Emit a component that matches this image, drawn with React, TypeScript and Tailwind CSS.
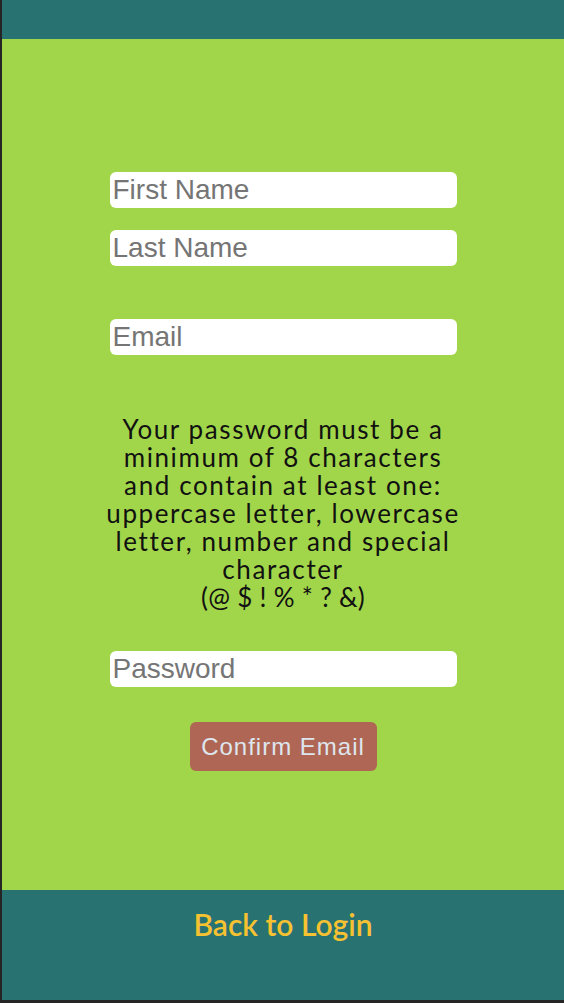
import React from "react";

export default function App() {
  const inputCls =
    "block w-[347px] h-[36px] bg-white rounded-[6px] px-[3px] text-[28px] text-black placeholder:text-[#757575] outline-none border-0";
  const inputFont = { fontFamily: '"Liberation Sans", Arial, sans-serif' } as React.CSSProperties;
  return (
    <div className="h-[1003px] w-[564px] flex flex-col border-l-2 border-b-[3px] border-[#252526] bg-[#252526]">
      <div className="h-[39px] bg-[#287372] shrink-0" />
      <main className="flex-1 bg-[#a2d64a] flex flex-col items-center pt-[133px]">
        <input className={inputCls} style={inputFont} placeholder="First Name" />
        <input className={`${inputCls} mt-[22px]`} style={inputFont} placeholder="Last Name" />
        <input className={`${inputCls} mt-[53px]`} style={inputFont} placeholder="Email" />
        <p className="mt-[60px] w-[380px] text-center text-[26px] leading-[28px] text-[#111] font-['Lato',sans-serif] tracking-[1.6px]">
          Your password must be a<br />
          minimum of 8 characters<br />
          and contain at least one:<br />
          uppercase letter, lowercase<br />
          letter, number and special<br />
          character<br />
          <span className="tracking-[0.3px]">(@ $ ! % * ? &amp;)</span>
        </p>
        <input className={`${inputCls} mt-[40px]`} style={inputFont} placeholder="Password" type="password" />
        <button
          className="mt-[35px] w-[187px] h-[49px] rounded-[6px] bg-[#b06654] text-[#dde6ee] text-[24px] tracking-[1px] font-['Liberation_Sans',Arial,sans-serif]"
        >
          Confirm Email
        </button>
      </main>
      <footer className="h-[110px] shrink-0 bg-[#287372] flex justify-center pt-[16px]">
        <span className="text-[30px] leading-[36px] font-semibold text-[#f7c231] font-['Lato',sans-serif] tracking-[0px]">
          Back to Login
        </span>
      </footer>
    </div>
  );
}
